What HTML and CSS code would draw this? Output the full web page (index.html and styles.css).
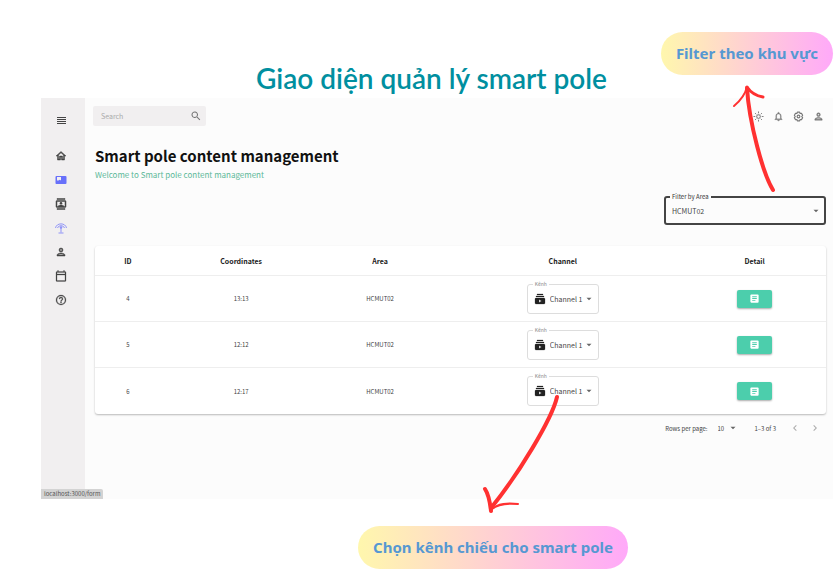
FILE: index.html
```html
<!DOCTYPE html>
<html lang="vi">
<head>
<meta charset="utf-8">
<meta name="viewport" content="width=device-width, initial-scale=1">
<title>Smart pole content management</title>
<link rel="stylesheet" href="styles.css">
</head>
<body>
<svg class="defs" aria-hidden="true">
  <symbol id="menu" viewBox="0 0 12 12"><path d="M2 3h9v1H2zm0 2h9v1H2zm0 2h9v1H2zm0 2h9v1H2z"/></symbol>
  <symbol id="home" viewBox="0 0 24 24"><path d="m12 5.69 5 4.5V18h-2v-6H9v6H7v-7.81l5-4.5M12 3 2 12h3v8h6v-6h2v6h6v-8h3L12 3z" stroke="currentColor"/></symbol>
  <symbol id="board" viewBox="0 0 24 24"><path d="M21 4H3a2 2 0 0 0-2 2v12c0 1.100.9 2 2 2h18a2 2 0 0 0 2-2V6a2 2 0 0 0-2-2zM4 6h8v7l-2.500-1.500L7 13H4z" fill-rule="evenodd"/></symbol>
  <symbol id="contacts" viewBox="0 0 24 24"><path d="M4 1h16v2H4zm0 20h16v2H4zM20 5H4a2 2 0 0 0-2 2v10c0 1.100.9 2 2 2h16a2 2 0 0 0 2-2V7a2 2 0 0 0-2-2zm0 12h-2c0-2-4-3-6-3s-6 1-6 3H4V7h16v10z" stroke="currentColor"/><circle cx="12" cy="10.500" r="2.500"/></symbol>
  <symbol id="antenna" viewBox="0 0 24 24"><path d="M1 12c2-11 20-11 22 0M5 12c2-6 12-6 14 0M12 10v11M7 22h10" fill="none" stroke="currentColor" stroke-width="2"/><circle cx="12" cy="11" r="2.500"/></symbol>
  <symbol id="person" viewBox="0 0 24 24"><path d="M12 4a4 4 0 1 0 0 8 4 4 0 0 0 0-8zm0 6a2 2 0 1 1 0-4 2 2 0 0 1 0 4zm0 4c-2.670 0-8 1.340-8 4v2h16v-2c0-2.660-5.330-4-8-4zm-6 4c.22-.72 3.310-2 6-2s5.800 1.290 6 2H6z" stroke="currentColor"/></symbol>
  <symbol id="calendar" viewBox="0 0 24 24"><path d="M20 3h-1V1h-2v2H7V1H5v2H4a2 2 0 0 0-2 2v16c0 1.100.9 2 2 2h16a2 2 0 0 0 2-2V5a2 2 0 0 0-2-2zm0 18H4V10h16v11zm0-13H4V5h16v3z" stroke="currentColor" stroke-width=".5"/></symbol>
  <symbol id="help" viewBox="0 0 24 24"><path d="M11 18h2v-2h-2v2zm1-16a10 10 0 1 0 0 20 10 10 0 0 0 0-20zm0 18a8 8 0 1 1 0-16 8 8 0 0 1 0 16zm0-14a4 4 0 0 0-4 4h2a2 2 0 1 1 4 0c0 2-3 1.750-3 5h2c0-2.250 3-2.500 3-5a4 4 0 0 0-4-4z" stroke="currentColor" stroke-width=".5"/></symbol>
  <symbol id="search" viewBox="0 0 24 24"><path d="M15.500 14h-.79l-.28-.27A6.500 6.500 0 1 0 13.730 14.430l.27.28v.79l5 4.990L20.490 19l-4.990-5zm-6 0a4.500 4.500 0 1 1 0-9 4.500 4.500 0 0 1 0 9z"/></symbol>
  <symbol id="sun" viewBox="0 0 24 24"><path d="M12 9a3 3 0 1 1 0 6 3 3 0 0 1 0-6m0-2a5 5 0 1 0 0 10 5 5 0 0 0 0-10z"/><path d="M12 1v4M12 19v4M1 12h4M19 12h4M4.500 4.500l2.500 2.500M17 17l2.500 2.500M4.500 19.500L7 17M17 7l2.500-2.500" stroke="currentColor" stroke-width="2"/></symbol>
  <symbol id="bell" viewBox="0 0 24 24"><path d="M12 22a2 2 0 0 0 2-2h-4c0 1.100.9 2 2 2zm6-6v-5c0-3.070-1.630-5.640-4.500-6.320V4a1.500 1.500 0 0 0-3 0v.68C7.640 5.360 6 7.920 6 11v5l-2 2v1h16v-1l-2-2zm-2 1H8v-6c0-2.480 1.510-4.500 4-4.500s4 2.020 4 4.500v6z" stroke="currentColor" stroke-width=".5"/></symbol>
  <symbol id="gear" viewBox="0 0 24 24"><path d="M9.500 2.500h5l1 3 3-.5 2.500 4.500-2 2.500 2 2.500-2.500 4.500-3-.5-1 3h-5l-1-3-3 .5L3 14.500 5 12 3 9.500 5.500 5l3 .5z" fill="none" stroke="currentColor" stroke-width="2.500" stroke-linejoin="round"/><circle cx="12" cy="12" r="3" fill="none" stroke="currentColor" stroke-width="2.500"/></symbol>
  <symbol id="queue" viewBox="0 0 24 24"><path d="M20 8H4V6h16v2zm-2-6H6v2h12V2zm4 10v8a2 2 0 0 1-2 2H4a2 2 0 0 1-2-2v-8c0-1.100.9-2 2-2h16a2 2 0 0 1 2 2zm-7 4-5-3v6l5-3z" stroke="currentColor" stroke-width=".5"/></symbol>
  <symbol id="article" viewBox="0 0 24 24"><path d="M19 3H5a2 2 0 0 0-2 2v14c0 1.100.9 2 2 2h14a2 2 0 0 0 2-2V5a2 2 0 0 0-2-2zm-5 14H7v-2h7v2zm3-4H7v-2h10v2zm0-4H7V7h10v2z"/></symbol>
  <symbol id="caret" viewBox="0 0 24 24"><path d="m6 9 6 6 6-6z"/></symbol>
  <symbol id="prev" viewBox="0 0 24 24"><path d="M15.410 7.410 14 6l-6 6 6 6 1.410-1.410L10.830 12z"/></symbol>
  <symbol id="next" viewBox="0 0 24 24"><path d="M10 6 8.590 7.410 13.170 12l-4.580 4.590L10 18l6-6z"/></symbol>
</svg>

<div class="slide">
  <header class="slide-head">
    <h1 class="slide-title">Giao diện quản lý smart pole</h1>
    <p class="pill pill-filter">Filter theo khu vực</p>
    <svg class="arrow arrow-filter" viewBox="0 0 46 112" aria-hidden="true"><path d="M15 4C17 38 31 90 41 106" stroke-width="4"/><path d="M2 22C8 17 13 11 15 3" stroke-width="2"/><path d="M15 3C19 9 25 12 31 13" stroke-width="3"/></svg>
  </header>

  <div class="app">
    <nav class="sidebar" aria-label="Main">
      <button class="icon-btn menu-btn" aria-label="Menu"><svg><use href="#menu"/></svg></button>
      <a href="#" aria-label="Home"><svg><use href="#home"/></svg></a>
      <a href="#" class="active" aria-label="Content"><svg><use href="#board"/></svg></a>
      <a href="#" aria-label="Contacts"><svg><use href="#contacts"/></svg></a>
      <a href="#" class="current" aria-label="Smart poles"><svg><use href="#antenna"/></svg></a>
      <a href="#" aria-label="Profile"><svg><use href="#person"/></svg></a>
      <a href="#" aria-label="Calendar"><svg><use href="#calendar"/></svg></a>
      <a href="#" aria-label="Help"><svg><use href="#help"/></svg></a>
    </nav>

    <main class="main">
      <div class="topbar">
        <form class="search">
          <input type="search" placeholder="Search" aria-label="Search">
          <button type="button" class="icon-btn" aria-label="Submit search"><svg><use href="#search"/></svg></button>
        </form>
        <div class="tools">
          <button class="icon-btn" aria-label="Theme"><svg><use href="#sun"/></svg></button>
          <button class="icon-btn" aria-label="Notifications"><svg><use href="#bell"/></svg></button>
          <button class="icon-btn" aria-label="Settings"><svg><use href="#gear"/></svg></button>
          <button class="icon-btn" aria-label="Account"><svg><use href="#person"/></svg></button>
        </div>
      </div>

      <div class="content">
        <h2 class="page-title">Smart pole content management</h2>
        <p class="subtitle">Welcome to Smart pole content management</p>

        <div class="field area-field">
          <label for="area">Filter by Area</label>
          <select id="area"><option>HCMUT02</option></select>
          <svg class="caret"><use href="#caret"/></svg>
        </div>

        <table class="poles">
          <thead>
            <tr><th class="c-id">ID</th><th class="c-coord">Coordinates</th><th class="c-area">Area</th><th class="c-channel">Channel</th><th class="c-detail">Detail</th></tr>
          </thead>
          <tbody>
            <tr>
              <td>4</td><td>13:13</td><td>HCMUT02</td>
              <td><div class="field channel-field"><label for="ch4">Kênh</label><svg class="queue"><use href="#queue"/></svg><select id="ch4"><option>Channel 1</option></select><svg class="caret"><use href="#caret"/></svg></div></td>
              <td><button class="detail" aria-label="Detail of pole 4"><svg><use href="#article"/></svg></button></td>
            </tr>
            <tr>
              <td>5</td><td>12:12</td><td>HCMUT02</td>
              <td><div class="field channel-field"><label for="ch5">Kênh</label><svg class="queue"><use href="#queue"/></svg><select id="ch5"><option>Channel 1</option></select><svg class="caret"><use href="#caret"/></svg></div></td>
              <td><button class="detail" aria-label="Detail of pole 5"><svg><use href="#article"/></svg></button></td>
            </tr>
            <tr>
              <td>6</td><td>12:17</td><td>HCMUT02</td>
              <td><div class="field channel-field"><label for="ch6">Kênh</label><svg class="queue"><use href="#queue"/></svg><select id="ch6"><option>Channel 1</option></select><svg class="caret"><use href="#caret"/></svg></div></td>
              <td><button class="detail" aria-label="Detail of pole 6"><svg><use href="#article"/></svg></button></td>
            </tr>
          </tbody>
        </table>

        <div class="pagination">
          <label for="rows">Rows per page:</label>
          <div class="rows"><select id="rows"><option>10</option></select><svg class="caret"><use href="#caret"/></svg></div>
          <span class="range">1–3 of 3</span>
          <button class="icon-btn" aria-label="Previous page"><svg><use href="#prev"/></svg></button>
          <button class="icon-btn" aria-label="Next page"><svg><use href="#next"/></svg></button>
        </div>
      </div>
    </main>
    <div class="status">localhost:3000/form</div>
  </div>

  <footer class="slide-foot">
    <p class="pill">Chọn kênh chiếu cho smart pole</p>
    <svg class="arrow arrow-channel" viewBox="0 0 80 122" aria-hidden="true"><path d="M75 4C70 26 36 82 9 115" stroke-width="4"/><path d="M3 96C7 102 8 109 9 118" stroke-width="4"/><path d="M9 117C16 110 26 110 36 111" stroke-width="2"/></svg>
  </footer>
</div>
</body>
</html>
```
FILE: styles.css
```css
* { box-sizing: border-box; }

body {
  margin: 0;
  background: #fff;
  color: #222;
  font-family: "Noto Sans CJK SC", "Noto Sans", sans-serif;
  font-size: 6px;
}

h1, h2, p { margin: 0; }

button, select, input { font: inherit; color: inherit; }

svg { display: block; fill: currentColor; }

.defs { position: absolute; width: 0; height: 0; }

.slide-head {
  position: relative;
  display: grid;
  grid-template-columns: 1fr auto 1fr;
  align-items: start;
  height: 98px;
  padding: 32px 4px 0 30px;
}

.slide-title {
  grid-column: 2;
  padding-top: 28px;
  font: 600 28px/36px Lato, "Noto Sans", sans-serif;
  color: #008fa0;
}

.pill {
  padding: 0 15px;
  border-radius: 22px;
  background: linear-gradient(90deg, #fff7ad, #ffa9f9);
  color: #5698d2;
  font: 700 15px/43px "Noto Sans", sans-serif;
  white-space: nowrap;
}

.pill-filter { grid-column: 3; justify-self: end; }

.arrow {
  position: absolute;
  z-index: 2;
  fill: none;
  stroke: #ff3131;
  stroke-linecap: round;
  stroke-linejoin: round;
  pointer-events: none;
}

.arrow-filter { top: 84px; right: 59px; width: 46px; height: 112px; }

.app {
  position: relative;
  display: flex;
  min-height: 401px;
  margin: 0 4px 0 41px;
  background: #fcfcfc;
}

.sidebar {
  display: flex;
  flex-direction: column;
  align-items: center;
  gap: 12px;
  width: 44px;
  padding: 16px 4px 0 0;
  background: #f1eff0;
  color: #444;
}

.sidebar svg { width: 12px; height: 12px; }
.sidebar a { color: inherit; }
.sidebar .active { color: #6870fa; }
.sidebar .current { color: #8f93f7; }
.sidebar .menu-btn { margin-bottom: 12px; }

.icon-btn {
  display: block;
  padding: 0;
  border: 0;
  background: none;
}

.icon-btn svg { width: 12px; height: 12px; }

.main { flex: 1; padding: 8px 7px 0 8px; }

.topbar {
  display: flex;
  justify-content: space-between;
  align-items: center;
}

.search {
  display: flex;
  align-items: center;
  width: 113px;
  height: 20px;
  padding: 0 4px 0 8px;
  border-radius: 2px;
  background: #f1eff0;
  color: #777;
}

.search input {
  flex: 1;
  min-width: 0;
  padding: 0;
  border: 0;
  outline: 0;
  background: none;
  font-size: 7px;
}

.search input::placeholder { color: #aaa; }

.tools { display: flex; gap: 9px; padding-right: 2px; color: #777; }
.tools svg { width: 11px; height: 11px; }

.content { padding-left: 2px; }

.page-title {
  padding-top: 20px;
  font-size: 15px;
  line-height: 20px;
  color: #111;
}

.subtitle {
  padding-top: 3px;
  font-size: 8px;
  line-height: 12px;
  color: #5bb898;
}

.field {
  position: relative;
  display: flex;
  align-items: center;
  border: 1px solid #ddd;
  border-radius: 3px;
  color: #444;
}

.field label {
  position: absolute;
  top: -5px;
  left: 5px;
  padding: 0 2px;
  background: #fff;
  font-size: 5px;
  line-height: 8px;
  color: #888;
}

.field select, .rows select {
  flex: 1;
  min-width: 0;
  padding: 0;
  border: 0;
  outline: 0;
  background: none;
  appearance: none;
}

.caret { width: 10px; height: 10px; color: #666; pointer-events: none; }

.area-field {
  width: 162px;
  height: 29px;
  margin: 15px 0 21px auto;
  padding: 0 3px 0 6px;
  border: 2px solid #444;
  font-size: 7px;
}

.area-field label { left: 4px; background: #fcfcfc; font-size: 6px; color: #333; }

.poles {
  width: 100%;
  table-layout: fixed;
  border-collapse: separate;
  border-spacing: 0;
  border-radius: 3px;
  background: #fff;
  box-shadow: 0 1px 2px #0004;
  text-align: center;
}

.poles th {
  height: 30px;
  padding: 0;
  border-bottom: 1px solid #eee;
  font-size: 7px;
}

.poles td {
  height: 46px;
  padding: 0;
  border-bottom: 1px solid #eee;
  color: #444;
}

.poles tr:last-child td { border-bottom: 0; }
.poles th:last-child, .poles td:last-child { padding-right: 4px; }

.c-id { width: 9%; }
.c-coord { width: 22%; }
.c-area { width: 16%; }
.c-channel { width: 34%; }
.c-detail { width: 19%; }

.channel-field {
  width: 72px;
  height: 30px;
  margin: 0 auto;
  padding: 0 4px 0 6px;
  font-size: 7px;
  text-align: left;
}

.queue { width: 12px; height: 12px; margin-right: 4px; color: #222; }

.detail {
  display: grid;
  place-items: center;
  width: 35px;
  height: 18px;
  margin: 0 auto;
  padding: 0;
  border: 0;
  border-radius: 2px;
  background: #4cceac;
  box-shadow: 0 1px 2px #0005;
  color: #fff;
}

.detail svg { width: 11px; height: 11px; }

.pagination {
  display: flex;
  justify-content: flex-end;
  align-items: center;
  gap: 8px;
  height: 28px;
  padding-right: 5px;
  color: #444;
}

.rows { display: flex; align-items: center; width: 20px; margin: 0 9px 0 2px; }
.range { margin-right: 5px; }
.pagination .icon-btn { color: #aaa; }

.status {
  position: absolute;
  bottom: 0;
  left: 0;
  padding: 0 3px;
  border-radius: 0 2px 0 0;
  background: #d3d3d3;
  color: #555;
  font-size: 6px;
  line-height: 10px;
}

.slide-foot {
  position: relative;
  display: flex;
  justify-content: center;
  padding: 27px 0 7px 149px;
}

.arrow-channel { top: -106px; left: 482px; width: 80px; height: 122px; }
```
